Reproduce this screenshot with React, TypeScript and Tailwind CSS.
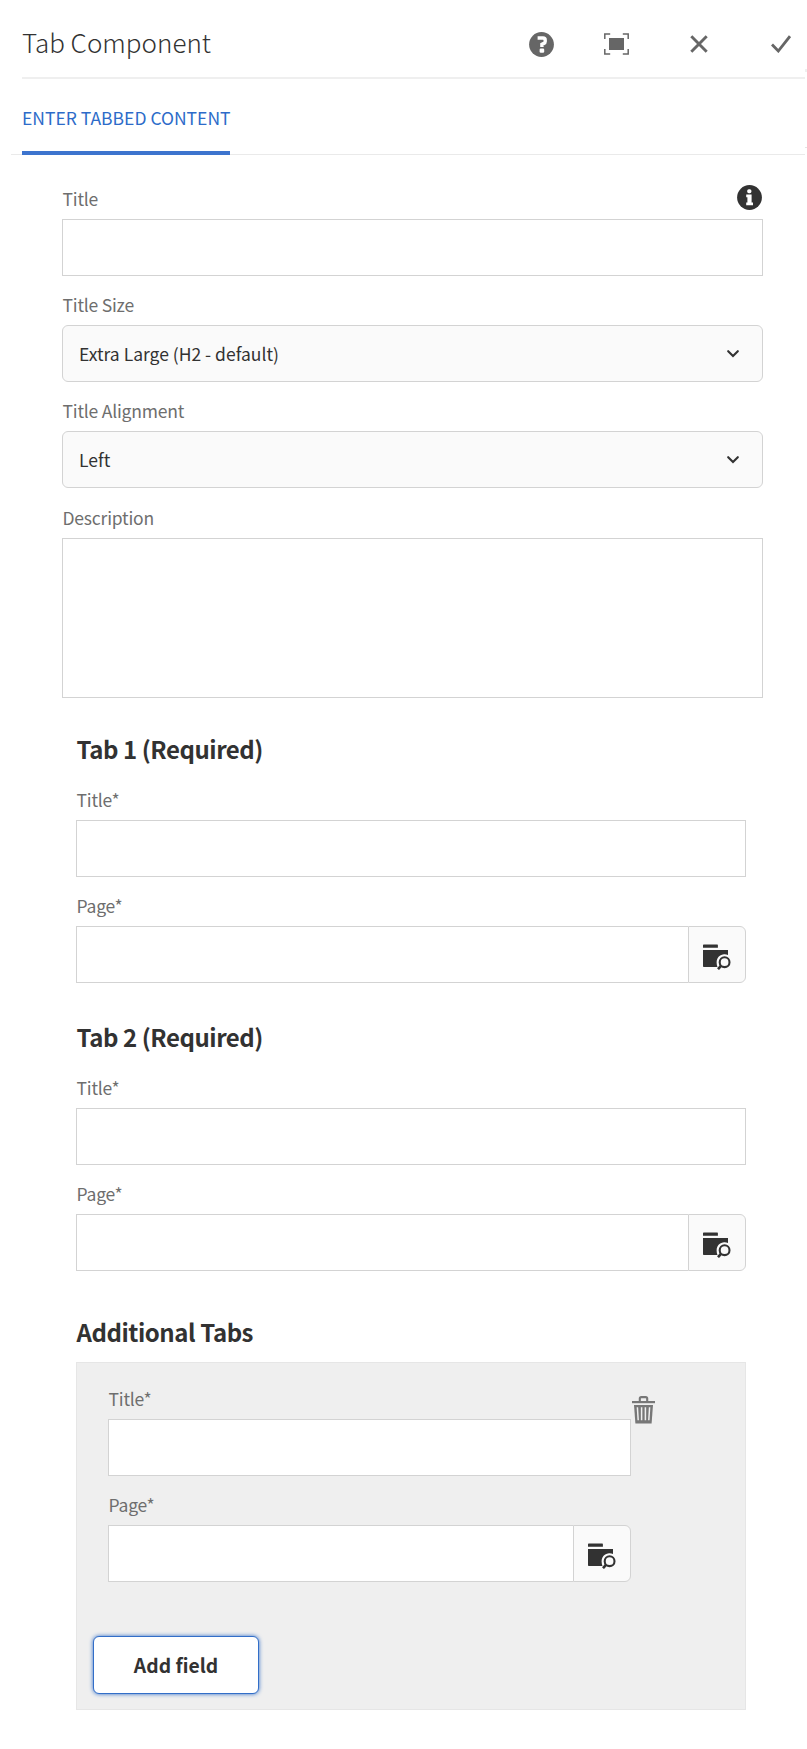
import type { ReactNode } from 'react';
import clsx from 'clsx';

const HelpIcon = () => (
  <svg viewBox="0 0 25 25" className="h-[25px] w-[25px]" aria-hidden="true">
    <circle cx="12.5" cy="12.5" r="12.4" fill="#666" />
    <path d="M8.6 6h5.4q2.2 0 2.2 2v1.5q0 1.3-1.3 1.9l-2 1v2.6" fill="none" stroke="#fff" strokeWidth="3.4" />
    <rect x="10.6" y="16.6" width="4.6" height="4.2" rx="1.2" fill="#fff" />
  </svg>
);

const FullscreenIcon = () => (
  <svg viewBox="0 0 25 22" className="h-[22px] w-[25px]" aria-hidden="true">
    <path d="M.8 6V.9h5.4M18.8.9h5.4V6M.8 16v5.1h5.4M18.8 21.1h5.4V16" fill="none" stroke="#666" strokeWidth="1.5" />
    <rect x="5" y="5" width="15" height="12" fill="#666" />
  </svg>
);

const CloseIcon = () => (
  <svg viewBox="0 0 18 18" className="h-[18px] w-[18px]" aria-hidden="true">
    <path d="M1.3 1.3l15.4 15.4M16.7 1.3L1.3 16.7" fill="none" stroke="#666" strokeWidth="2.9" />
  </svg>
);

const CheckIcon = () => (
  <svg viewBox="0 0 20 18" className="h-[18px] w-[20px]" aria-hidden="true">
    <path d="M1 9.6l6.3 6.4L19 1.2" fill="none" stroke="#666" strokeWidth="2.8" />
  </svg>
);

const InfoIcon = () => (
  <svg viewBox="0 0 25 25" className="h-[25px] w-[25px]" aria-hidden="true">
    <circle cx="12.5" cy="12.5" r="12.4" fill="#323232" />
    <rect x="10.2" y="4.2" width="4.2" height="4" rx="1.6" fill="#fff" />
    <path d="M9.2 9.6h5.4v8h1.4v2.6H9.2v-2.6h1.2v-5.4H9.2z" fill="#fff" />
  </svg>
);

const ChevronIcon = () => (
  <svg viewBox="0 0 12 8" className="h-2 w-3" aria-hidden="true">
    <path d="M1.2 1.2L6 6l4.8-4.8" fill="none" stroke="#323232" strokeWidth="2.1" strokeLinecap="round" />
  </svg>
);

const FolderSearchIcon = () => (
  <svg viewBox="0 0 28 26" className="h-[26px] w-[28px]" aria-hidden="true">
    <path d="M0 1.2Q0 .5.7.5h13.6q.6 0 .6.7v2.6H0zM0 6h25v5A8 8 0 0 0 13.6 18.6q0 2.2.9 4.4H.8Q0 23 0 22.2z" fill="#323232" />
    <circle cx="21.6" cy="18.2" r="4.9" fill="none" stroke="#323232" strokeWidth="2.1" />
    <path d="M18.2 21.6L15 25.2" fill="none" stroke="#323232" strokeWidth="2.6" />
  </svg>
);

const TrashIcon = () => (
  <svg viewBox="0 0 23 28" className="h-[28px] w-[23px]" aria-hidden="true">
    <path d="M0 5h23v2.2H0z" fill="#777" />
    <path d="M7.8 5.5V2.6q0-1.5 1.5-1.5h4.4q1.5 0 1.5 1.5v2.9" fill="none" stroke="#777" strokeWidth="2.1" />
    <path d="M2 9h19l-1.4 18.5H3.4z" fill="#777" />
    <path d="M5.4 11.2l.8 13M9.6 11.2v13M13.4 11.2v13M17.6 11.2l-.8 13" stroke="#efefef" strokeWidth="1.5" />
  </svg>
);

const Label = ({ children }: { children: ReactNode }) => (
  <label className="block h-[26px] pl-[0.5px] text-[17.5px] leading-[26px] tracking-[-0.2px] text-[#6e6e6e]">
    {children}
  </label>
);

const TextField = ({ label }: { label: string }) => (
  <div className="h-[106px]">
    <Label>{label}</Label>
    <div className="mt-[7px] h-[57px] border border-[#d3d3d3] bg-white" />
  </div>
);

const SelectField = ({ label, value }: { label: string; value: string }) => (
  <div className="h-[106.4px]">
    <Label>{label}</Label>
    <div className="mt-[7px] flex h-[57px] items-center justify-between rounded-[6px] border border-[#d3d3d3] bg-[#fafafa] pr-[23px] pl-4">
      <span className="pt-px text-[17.5px] text-[#323232]">{value}</span>
      <ChevronIcon />
    </div>
  </div>
);

const PathField = ({ label }: { label: string }) => (
  <div>
    <Label>{label}</Label>
    <div className="mt-[7px] flex h-[57px]">
      <div className="flex-1 border border-r-0 border-[#d3d3d3] bg-white" />
      <button className="flex w-[58px] items-center justify-center rounded-r-[6px] border border-[#d3d3d3] bg-[#fafafa] pt-[5px]">
        <FolderSearchIcon />
      </button>
    </div>
  </div>
);

const Heading = ({ children }: { children: ReactNode }) => (
  <h3 className="pl-[0.5px] text-[24px] leading-[36px] font-bold tracking-[-0.45px] text-[#323232]">{children}</h3>
);

const TabSection = ({ title, className }: { title: string; className?: string }) => (
  <section className={clsx('mr-[17px] ml-[14px]', className)}>
    <Heading>{title}</Heading>
    <div className="mt-5">
      <TextField label="Title*" />
      <PathField label="Page*" />
    </div>
  </section>
);

const App = () => (
  <div
    className="h-[1749px] w-[807px] overflow-hidden bg-white"
    style={{ fontFamily: '"Noto Sans CJK SC", "Noto Sans", sans-serif' }}
  >
    <header className="relative mr-[2px] ml-[22px] flex h-[79px] items-center border-b-2 border-[#efefef] pt-[11px]">
      <h1 className="flex-1 pb-[6px] text-[26px] font-light text-[#323232]">Tab Component</h1>
      <div className="flex items-center pr-[14px]">
        <HelpIcon />
        <span className="w-[50px]" />
        <FullscreenIcon />
        <span className="w-[61px]" />
        <CloseIcon />
        <span className="w-[63px]" />
        <CheckIcon />
      </div>
      <span className="absolute top-[69px] -right-[2px] h-[3px] w-[2px] bg-[#efefef]" />
    </header>

    <nav className="relative mr-[2px] ml-[11px] flex h-[76px] border-b border-[#eaeaea] pl-[11px]">
      <div className="h-[76px] w-[208px] border-b-4 border-[#3d74ce] pt-[25.5px] text-[17.5px] leading-[26px] whitespace-nowrap text-[#2d6bc9]">
        ENTER TABBED CONTENT
      </div>
      <span className="absolute top-[68px] -right-[2px] h-px w-[2px] bg-[#e4e4e4]" />
    </nav>

    <main className="mr-[44px] ml-[62px] pt-[31px]">
      <div className="relative">
        <TextField label="Title" />
        <div className="absolute top-[-1px] right-[1px]">
          <InfoIcon />
        </div>
      </div>
      <SelectField label="Title Size" value="Extra Large (H2 - default)" />
      <SelectField label="Title Alignment" value="Left" />
      <Label>Description</Label>
      <div className="mt-[7px] h-[160px] border border-[#d3d3d3] bg-white" />

      <TabSection title="Tab 1 (Required)" className="mt-[33.2px]" />
      <TabSection title="Tab 2 (Required)" className="mt-[36px]" />

      <section className="mt-[43px] mr-[17px] ml-[14px]">
        <Heading>Additional Tabs</Heading>
        <div className="mt-[12px] h-[348px] border border-[#e6e6e6] bg-[#efefef] pt-[23px] pl-[31px]">
          <div className="flex">
            <div className="w-[523px]">
              <TextField label="Title*" />
              <PathField label="Page*" />
            </div>
            <div className="mt-[10px] ml-[1px]">
              <TrashIcon />
            </div>
          </div>
          <button className="mt-[54px] ml-[-15px] flex h-[58px] w-[166px] items-center justify-center rounded-[6px] border border-[#326ec8] bg-white text-[19.3px] font-bold text-[#323232] shadow-[0_0_4px_#326ec8]">
            Add field
          </button>
        </div>
      </section>
    </main>
  </div>
);

export default App;
